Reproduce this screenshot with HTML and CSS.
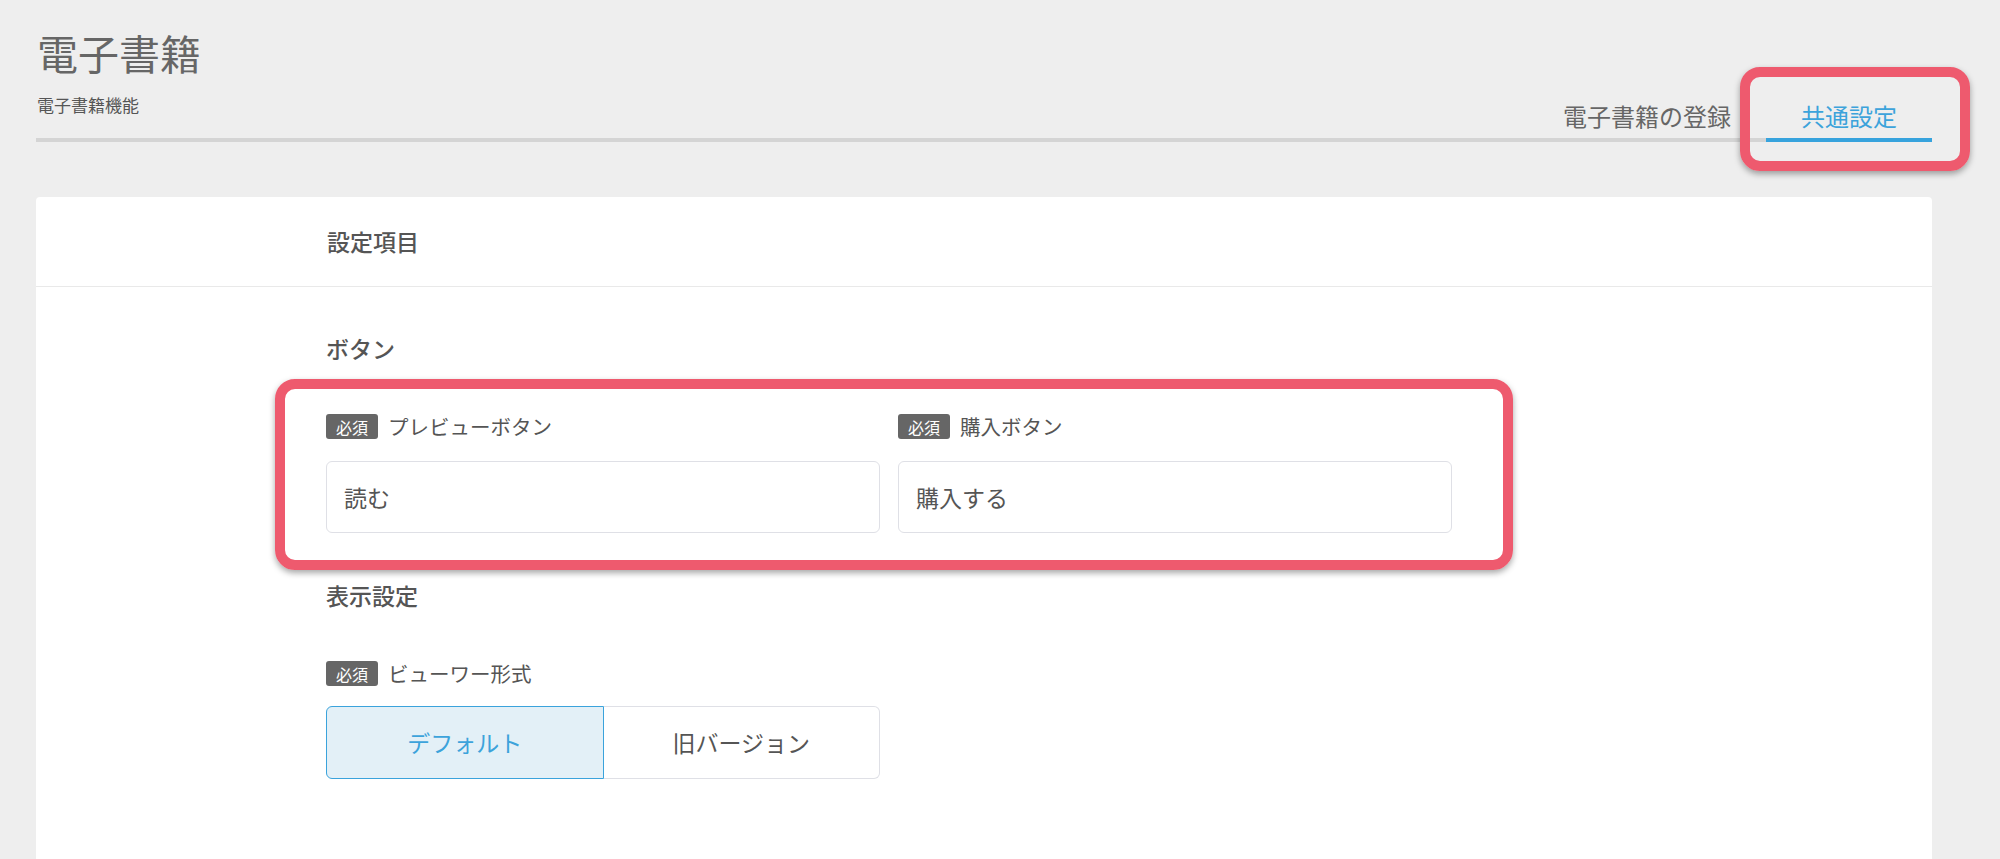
FILE: index.html
```html
<!DOCTYPE html>
<html lang="ja">
<head>
<meta charset="utf-8">
<title>電子書籍</title>
<link rel="stylesheet" href="styles.css">
</head>
<body>
<div class="page">
  <header class="header">
    <div class="heading">
      <h1 class="title">電子書籍</h1>
      <p class="subtitle">電子書籍機能</p>
    </div>
    <nav class="tabs">
      <a class="tab">電子書籍の登録</a>
      <a class="tab tab-active">共通設定</a>
    </nav>
  </header>

  <section class="card">
    <div class="card-header">
      <h2 class="section-title">設定項目</h2>
    </div>
    <div class="card-body">
      <h3 class="group-title">ボタン</h3>
      <div class="field-row">
        <div class="field">
          <div class="label"><span class="badge">必須</span><span class="label-text">プレビューボタン</span></div>
          <div class="input">読む</div>
        </div>
        <div class="field">
          <div class="label"><span class="badge">必須</span><span class="label-text">購入ボタン</span></div>
          <div class="input">購入する</div>
        </div>
      </div>

      <h3 class="group-title group-title-2">表示設定</h3>
      <div class="field">
        <div class="label"><span class="badge">必須</span><span class="label-text">ビューワー形式</span></div>
        <div class="segment">
          <div class="seg seg-active">デフォルト</div>
          <div class="seg">旧バージョン</div>
        </div>
      </div>
    </div>
  </section>
</div>

<div class="annot annot-tab"></div>
<div class="annot annot-fields"></div>
</body>
</html>
```

FILE: styles.css
```css
html, body {
  margin: 0;
  padding: 0;
}
body {
  background: #eeeeee;
  font-family: "Noto Sans CJK JP", "Noto Sans", sans-serif;
  color: #555555;
  overflow: hidden;
  height: 859px;
  position: relative;
}
.page {
  padding: 0 68px 0 36px;
}
.header {
  display: flex;
  justify-content: space-between;
  align-items: flex-end;
  border-bottom: 4px solid #d4d4d4;
}
.heading {
  padding: 32px 0 25px 1px;
}
.title {
  margin: 0;
  font-size: 41px;
  line-height: 1;
  font-weight: 400;
  color: #666666;
}
.subtitle {
  margin: 23px 0 0;
  font-size: 17px;
  line-height: 1;
  color: #555555;
}
.tabs {
  display: flex;
}
.tab {
  font-size: 24px;
  line-height: 1;
  padding: 0 35px 10px;
  margin-bottom: -4px;
  border-bottom: 4px solid transparent;
  color: #666666;
}
.tab-active {
  color: #3ca3db;
  border-bottom-color: #37a3dd;
}
.card {
  margin-top: 55px;
  background: #ffffff;
  border-radius: 4px 4px 0 0;
  min-height: 662px;
}
.card-header {
  padding: 33px 0 33px 291px;
  border-bottom: 1px solid #e9e9e9;
}
.section-title, .group-title {
  margin: 0;
  font-size: 23px;
  line-height: 1;
  font-weight: 500;
  color: #555555;
}
.card-body {
  padding: 50px 0 0 290px;
}
.field-row {
  display: flex;
  gap: 18px;
  margin-top: 54px;
}
.field {
  width: 554px;
}
.group-title-2 {
  margin-top: 51px;
}
.group-title-2 + .field {
  margin-top: 54px;
}
.label {
  display: flex;
  align-items: center;
  gap: 10px;
  height: 25px;
}
.badge {
  display: inline-flex;
  align-items: center;
  justify-content: center;
  width: 52px;
  height: 25px;
  background: #666666;
  color: #ffffff;
  border-radius: 3px;
  font-size: 16px;
  line-height: 1;
}
.label-text {
  font-size: 20.5px;
  line-height: 1;
  color: #555555;
}
.input {
  margin-top: 22px;
  box-sizing: border-box;
  height: 72px;
  border: 1px solid #dfe0e6;
  border-radius: 6px;
  display: flex;
  align-items: center;
  padding-left: 17px;
  font-size: 23px;
  line-height: 1;
  color: #555555;
}
.segment {
  margin-top: 20px;
  display: flex;
  height: 73px;
}
.seg {
  flex: 1;
  box-sizing: border-box;
  display: flex;
  align-items: center;
  justify-content: center;
  font-size: 23px;
  line-height: 1;
  color: #555555;
  border: 1px solid #dfe0e6;
  border-left: none;
  border-radius: 0 6px 6px 0;
}
.seg-active {
  background: #e3f0f7;
  border: 1px solid #3aa3dc;
  border-radius: 6px 0 0 6px;
  color: #3ca3db;
}
.annot {
  position: absolute;
  box-sizing: border-box;
  border: 10px solid #ee5a6e;
  border-radius: 20px;
  box-shadow: 0 3px 6px rgba(0, 0, 0, 0.35);
}
.annot-tab {
  left: 1740px;
  top: 67px;
  width: 230px;
  height: 104px;
}
.annot-fields {
  left: 275px;
  top: 379px;
  width: 1238px;
  height: 191px;
}
```
